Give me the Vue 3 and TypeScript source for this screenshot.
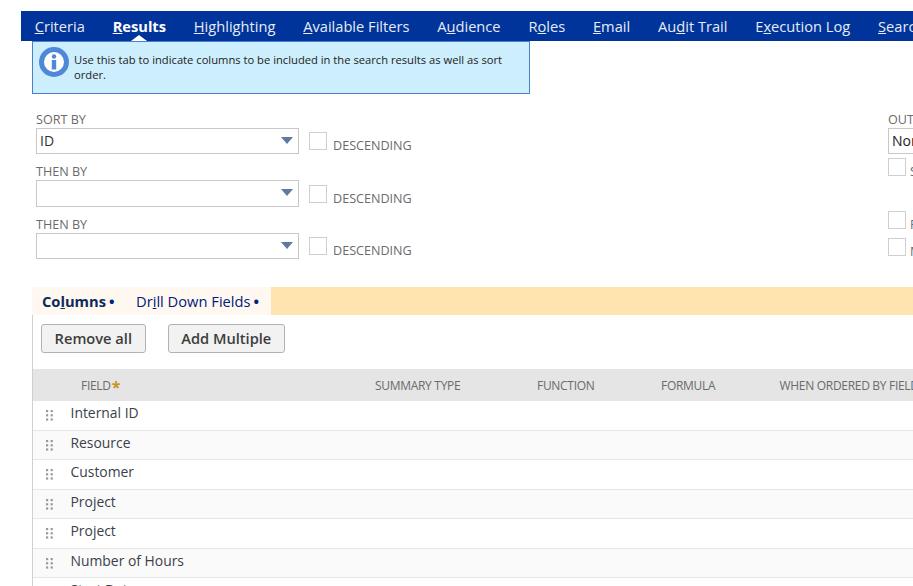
<script setup lang="ts">
interface Tab { before: string; key: string; after: string }
const tabs: (Tab & { active?: boolean })[] = [
  { before: '', key: 'C', after: 'riteria' },
  { before: '', key: 'R', after: 'esults', active: true },
  { before: '', key: 'H', after: 'ighlighting' },
  { before: '', key: 'A', after: 'vailable Filters' },
  { before: 'A', key: 'u', after: 'dience' },
  { before: 'R', key: 'o', after: 'les' },
  { before: '', key: 'E', after: 'mail' },
  { before: 'Au', key: 'd', after: 'it Trail' },
  { before: 'E', key: 'x', after: 'ecution Log' },
  { before: '', key: 'S', after: 'earch' },
]
const sorts = [
  { label: 'SORT BY', value: 'ID' },
  { label: 'THEN BY', value: '' },
  { label: 'THEN BY', value: '' },
]
const rows = ['Internal ID', 'Resource', 'Customer', 'Project', 'Project', 'Number of Hours', 'Start Date']
</script>

<template>
  <div class="page">
    <nav class="tabs">
      <a v-for="t in tabs" :key="t.before + t.key + t.after" class="tab" :class="{ active: t.active }">{{ t.before }}<u>{{ t.key }}</u>{{ t.after }}</a>
    </nav>

    <div class="notice">
      <svg class="info" width="30" height="30" viewBox="0 0 30 30">
        <circle cx="15" cy="15" r="12.5" fill="#fff" stroke="#4f88d8" stroke-width="5" />
        <circle cx="15" cy="9.5" r="2.2" fill="#4f88d8" />
        <rect x="12.8" y="13" width="4.4" height="9.5" fill="#4f88d8" />
      </svg>
      <p>Use this tab to indicate columns to be included in the search results as well as sort order.</p>
    </div>

    <section class="form">
      <div class="sorts">
        <div v-for="(s, i) in sorts" :key="i" class="sort">
          <label>{{ s.label }}</label>
          <div class="sort-line">
            <div class="select">
              <span>{{ s.value }}</span>
              <i class="caret"></i>
            </div>
            <span class="check"></span>
            <span class="desc">DESCENDING</span>
          </div>
        </div>
      </div>
      <div class="output">
        <label>OUTPUT</label>
        <div class="select small"><span>None</span></div>
        <div class="opt first"><span class="check"></span><span class="opt-text">S</span></div>
        <div class="opt second"><span class="check"></span><span class="opt-text">F</span></div>
        <div class="opt third"><span class="check"></span><span class="opt-text">M</span></div>
      </div>
    </section>

    <div class="subtabs">
      <a class="sub on">Co<u>l</u>umns<b>•</b></a>
      <a class="sub">Dr<u>i</u>ll Down Fields<b>•</b></a>
    </div>

    <section class="panel">
      <div class="buttons">
        <button>Remove all</button>
        <button>Add Multiple</button>
      </div>
      <div class="thead">
        <span class="c-field">FIELD<em>*</em></span>
        <span class="c-sum">SUMMARY TYPE</span>
        <span class="c-fn">FUNCTION</span>
        <span class="c-form">FORMULA</span>
        <span class="c-when">WHEN ORDERED BY FIELD</span>
      </div>
      <div v-for="(r, i) in rows" :key="i" class="row">
        <svg class="grip" width="7" height="11" viewBox="0 0 7 11" fill="#999">
          <rect x="0" y="0" width="2.2" height="2.2" /><rect x="4.6" y="0" width="2.2" height="2.2" />
          <rect x="0" y="4.2" width="2.2" height="2.2" /><rect x="4.6" y="4.2" width="2.2" height="2.2" />
          <rect x="0" y="8.4" width="2.2" height="2.2" /><rect x="4.6" y="8.4" width="2.2" height="2.2" />
        </svg>
        <span>{{ r }}</span>
      </div>
    </section>
  </div>
</template>

<style>
html, body { margin: 0; height: 100%; overflow: hidden; background: #fff; }
</style>

<style scoped>
.page {
  width: 913px;
  height: 586px;
  overflow: hidden;
  padding-top: 11px;
  box-sizing: border-box;
  font-family: "Open Sans", "Liberation Sans", sans-serif;
  color: #333;
}
.tabs {
  display: flex;
  gap: 27.8px;
  height: 30px;
  margin-left: 21px;
  padding-left: 13.7px;
  background: #00349a;
  white-space: nowrap;
  overflow: hidden;
}
.tab {
  position: relative;
  font-size: 14.65px;
  line-height: 30px;
  color: #e6ecf6;
}
.tab.active { color: #fff; font-weight: 700; }
.tab.active::after {
  content: "";
  position: absolute;
  left: 50%;
  bottom: 0;
  margin-left: -8px;
  border: 8px solid transparent;
  border-top: 0;
  border-bottom: 6px solid #fff;
}
.notice {
  display: flex;
  gap: 5px;
  width: 490px;
  height: 51px;
  margin-left: 32px;
  padding-left: 6px;
  background: #cdeefc;
  border: 1px solid #4a7fcf;
}
.info { flex: none; margin-top: 5px; }
.notice p {
  margin: 10px 0 0;
  font-size: 11.2px;
  line-height: 15px;
  color: #222;
}
.form {
  display: flex;
  margin-top: 16px;
  margin-left: 36px;
  height: 177px;
}
.sorts { width: 852px; flex: none; }
.sort { height: 53px; }
.sort:first-child { height: 52px; }
label {
  display: block;
  height: 18px;
  font-size: 12.6px;
  line-height: 20px;
  color: #6b6b6b;
}
.sort-line { display: flex; align-items: flex-start; }
.select {
  position: relative;
  width: 263px;
  height: 26px;
  box-sizing: border-box;
  border: 1px solid #c8c8c8;
  padding-left: 3px;
  font-size: 14px;
  line-height: 24px;
  color: #333;
}
.sort:nth-child(2) .select { height: 27px; }
.select.small { width: 60px; color: #222; border-right: 0; }
.caret {
  position: absolute;
  right: 5px;
  top: 8px;
  border: 6.5px solid transparent;
  border-top: 7.5px solid #5f7a9e;
  border-bottom: 0;
}
.check {
  display: block;
  flex: none;
  width: 18px;
  height: 18px;
  box-sizing: border-box;
  border: 1px solid #cfcfcf;
  background: #fff;
}
.sort-line .check { margin: 4px 6px 0 10px; }
.sort:nth-child(2) .check { margin-top: 5px; }
.desc {
  font-size: 12.6px;
  line-height: 16px;
  margin-top: 10px;
  color: #6b6b6b;
}
.sort:nth-child(2) .desc { margin-top: 11px; }
.output { white-space: nowrap; }
.opt { display: flex; gap: 4px; }
.opt-text { font-size: 12.6px; color: #6b6b6b; line-height: 18px; margin-top: 5px; }
.opt.first { margin-top: 4px; }
.opt.second { margin-top: 30px; }
.opt.third { margin-top: 4px; }
.subtabs {
  display: flex;
  height: 28px;
  margin-left: 32px;
  background: #ffe4b0;
  white-space: nowrap;
}
.sub {
  display: block;
  height: 28px;
  background: #fff8f0;
  font-size: 14.7px;
  line-height: 29px;
  color: #00207a;
  padding-left: 10px;
  width: 94px;
}
.sub.on { font-weight: 700; color: #0b2a5c; }
.sub:last-child { width: 135px; padding-left: 0; }
.sub b { font-size: 14.7px; font-weight: 700; margin-left: 3px; color: #00207a; }
.panel {
  margin-left: 32px;
  border-left: 1px solid #d0d0d0;
}
.buttons {
  display: flex;
  gap: 22px;
  padding: 9px 0 16px 8px;
}
button {
  display: block;
  height: 29px;
  padding: 0 12.6px 2px;
  box-sizing: border-box;
  font-family: inherit;
  font-size: 14.65px;
  font-weight: 600;
  color: #3d3d3d;
  background: #f2f2f2;
  border: 1px solid #b2b2b2;
  border-radius: 3px;
}
.thead {
  display: flex;
  height: 32px;
  align-items: center;
  background: #e5e5e5;
  font-size: 12px;
  letter-spacing: -0.3px;
  color: #6b6b6b;
  white-space: nowrap;
}
.c-field { width: 294px; padding-left: 48px; flex: none; }
.c-field em {
  position: relative;
  top: 3px;
  color: #c9921e;
  font-style: normal;
  font-weight: 700;
  font-size: 16px;
  line-height: 12px;
  margin-left: 1px;
}
.c-sum { width: 162px; flex: none; }
.c-fn { width: 124px; flex: none; }
.c-form { width: 118.5px; flex: none; }
.row {
  display: flex;
  align-items: center;
  height: 29.5px;
  box-sizing: border-box;
  border-bottom: 1px solid #e6e6e6;
  padding-left: 12.5px;
  padding-bottom: 5px;
  font-size: 13.9px;
  color: #3a3f4a;
}
.row:nth-child(even) { background: #fafafa; }
.grip { margin-right: 18px; margin-top: 6px; flex: none; }
</style>
